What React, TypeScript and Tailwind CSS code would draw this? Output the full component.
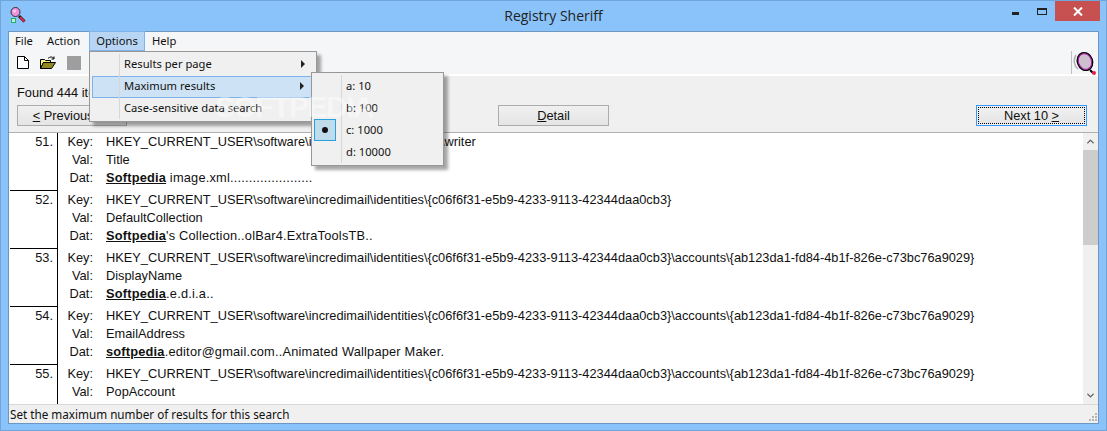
import { ChevronDown, ChevronUp } from "lucide-react";

const KEY_ROOT = "HKEY_CURRENT_USER\\software\\incredimail\\identities\\";
const KEY_BASE = KEY_ROOT + "{c06f6f31-e5b9-4233-9113-42344daa0cb3}";
const ACCOUNT = KEY_BASE + "\\accounts\\{ab123da1-fd84-4b1f-826e-c73bc76a9029}";

const results = [
  { n: 51, key: KEY_ROOT + "im\\writer", val: "Title", hit: "Softpedia", dat: " image.xml......................" },
  { n: 52, key: KEY_BASE, val: "DefaultCollection", hit: "Softpedia", dat: "'s Collection..olBar4.ExtraToolsTB.." },
  { n: 53, key: ACCOUNT, val: "DisplayName", hit: "Softpedia", dat: ".e.d.i.a.." },
  { n: 54, key: ACCOUNT, val: "EmailAddress", hit: "softpedia", dat: ".editor@gmail.com..Animated Wallpaper Maker." },
  { n: 55, key: ACCOUNT, val: "PopAccount", hit: "", dat: "" },
];

function AppIcon() {
  return (
    <svg width="16" height="16" viewBox="0 0 16 16">
      <rect x="1.500" y="11.500" width="4" height="4" fill="#c8f0d0" stroke="#22b070" />
      <path d="M9 9l5.500 5.500" stroke="#111" strokeWidth="3" />
      <path d="M10 10l4.500 4.500" stroke="#e02850" strokeWidth="2" />
      <circle cx="5.500" cy="5" r="4.500" fill="#f090e0" stroke="#333" />
      <circle cx="4.500" cy="4" r="1.500" fill="#f8d0f0" />
    </svg>
  );
}

function Magnifier() {
  return (
    <svg width="24" height="24" viewBox="0 0 24 24">
      <path d="M3 4c-3 5-2 11 2 14" fill="none" stroke="#b0b0b0" strokeWidth="1.500" />
      <ellipse cx="12" cy="10.500" rx="7.500" ry="9" transform="rotate(-20 12 10.500)" fill="#cdbfcd" stroke="#000" strokeWidth="1.500" />
      <ellipse cx="12" cy="10.500" rx="6.500" ry="8" transform="rotate(-20 12 10.500)" fill="none" stroke="#a818a8" />
      <path d="M17 19l3 3" stroke="#000" strokeWidth="2" />
      <circle cx="21" cy="22" r="2" fill="#e82050" />
    </svg>
  );
}

function FileIcon() {
  return (
    <svg width="12" height="13" viewBox="0 0 12 13">
      <path d="M.5.500h7l4 4v8h-11z" fill="#fff" stroke="#000" />
      <path d="M7.500.500v4h4" fill="none" stroke="#000" />
    </svg>
  );
}

function FolderIcon() {
  return (
    <svg width="16" height="13" viewBox="0 0 16 13">
      <path d="M.5 3.500h4l1 1h5v2h-7l-3 6z" fill="#f8f080" stroke="#000" />
      <path d="M.5 12.500l3-6h12l-4 6z" fill="#8f8a20" stroke="#000" />
      <path d="M8 2.500c2-2 4-2 6 0M14 .5v2.500h-2.500" fill="none" stroke="#000" />
    </svg>
  );
}

function Arrow() {
  return <span className="w-0 h-0 border-y-[4px] border-y-transparent border-l-[4px] border-l-[#222]" />;
}

function Button({ children, className }: { children: React.ReactNode; className: string }) {
  return (
    <div className={`h-[21px] flex items-center justify-center bg-gradient-to-b from-[#f0f0f0] to-[#e5e5e5] border border-[#acacac] text-[#111] ${className}`}>
      {children}
    </div>
  );
}

function ResultRow({ r, last }: { r: (typeof results)[number]; last: boolean }) {
  return (
    <div className={`flex ${last ? "h-[39px]" : "h-[58px]"}`}>
      <div className="w-px shrink-0" />
      <div className="flex flex-col w-[48px] shrink-0">
        <div className="flex-1 border-r border-black pr-[4px] text-right leading-[18px]">{r.n}.</div>
        {!last && <div className="h-px bg-black" />}
      </div>
      <div className="w-[36px] shrink-0 text-right leading-[18px]">
        <div className="pr-px">Key:</div>
        <div className="pr-px">Val:</div>
        {!last && <div className="pr-px">Dat:</div>}
      </div>
      <div className="pl-[12px] leading-[18px] whitespace-pre">
        <div>{r.key}</div>
        <div>{r.val}</div>
        {!last && (
          <div className="tracking-[0.2px]">
            <span className="font-bold underline">{r.hit}</span>
            {r.dat}
          </div>
        )}
      </div>
    </div>
  );
}

export default function App() {
  return (
    <div className="relative w-[1107px] h-[431px] overflow-hidden flex flex-col bg-[#8ac3f9] border border-[#6fa5d8] font-['Noto_Sans',sans-serif] text-[11.2px] text-[#111]">
      {/* title bar */}
      <div className="h-[30px] shrink-0 flex items-start relative">
        <div className="pl-[9px] mt-[6px]"><AppIcon /></div>
        <div className="absolute inset-x-0 top-[5px] text-center text-[14px] leading-[20px] text-[#222] font-['Open_Sans',sans-serif]">Registry Sheriff</div>
        <div className="ml-auto flex items-start">
          <div className="w-[28px] h-[20px] flex justify-center pt-[11px]"><div className="w-[7px] h-[3px] bg-[#222]" /></div>
          <div className="w-[26px] h-[20px] flex justify-center pt-[7px]"><div className="w-[8px] h-[4px] border border-t-[2px] border-[#222] box-content" /></div>
          <div className="w-[45px] h-[20px] mr-[6px] bg-[#c75050] flex items-center justify-center">
            <svg width="10" height="9" viewBox="0 0 10 9"><path d="M1 .5l8 8M9 .5l-8 8" stroke="#fff" strokeWidth="2" /></svg>
          </div>
        </div>
      </div>

      <div className="flex-1 min-h-0 mx-[7px] mb-[6px] flex flex-col border border-[#6d97c0] bg-[#f0f0f0]">
        {/* menu bar */}
        <div className="h-[19px] shrink-0 flex bg-[#f5f6f7] leading-[17px]">
          <span className="w-[32px] pl-[6px]">File</span>
          <span className="w-[48px] pl-[6px]">Action</span>
          <span className="w-[56px] h-[20px] -mt-px text-center bg-[#b8d6f4] border border-[#7fb4e8] leading-[17px]">Options</span>
          <span className="pl-[7px]">Help</span>
        </div>
        {/* toolbar */}
        <div className="h-[25px] shrink-0 flex items-center bg-[#f5f6f7] border-b-2 border-b-white pl-[8px]">
          <FileIcon />
          <div className="ml-[11px]"><FolderIcon /></div>
          <div className="w-[14px] h-[14px] bg-[#9e9e9e] ml-[11px]" />
          <div className="ml-[8px] w-[2px] h-[15px] bg-[#a8a8a8]" />
          <div className="ml-auto w-[27px] h-full border-l border-[#c0c0c0] flex items-center justify-center">
            <Magnifier />
          </div>
        </div>
        {/* search summary and paging */}
        <div className="h-[56px] shrink-0 flex flex-col pl-[8px] pr-[11px] bg-[#f0f0f0] font-['Liberation_Sans',sans-serif] text-[12.8px]">
          <div className="h-[29px] pt-[9px] leading-[16px]">Found 444 items</div>
          <div className="flex items-start">
            <Button className="w-[110px]"><span><u>&lt;</u> Previous 10</span></Button>
            <Button className="w-[111px] ml-[371px]"><span><u>D</u>etail</span></Button>
            <div className="ml-auto h-[21px] w-[111px] border border-[#3399ff] p-px">
              <div className="h-full flex items-center justify-center border border-dotted border-black bg-gradient-to-b from-[#f0f0f0] to-[#e5e5e5]">
                <span>Next 10 <u>&gt;</u></span>
              </div>
            </div>
          </div>
        </div>
        {/* results */}
        <div className="flex-1 min-h-0 flex bg-white border-t border-[#b0b0b0] font-['Liberation_Sans',sans-serif] text-[12.8px] text-[#111]">
          <div className="flex-1 min-w-0 overflow-hidden">
            {results.map((r, i) => (
              <ResultRow key={r.n} r={r} last={i === results.length - 1} />
            ))}
          </div>
          <div className="w-[15px] shrink-0 flex flex-col items-center bg-[#f0f0f0]">
            <ChevronUp size={11} strokeWidth={3} className="mt-[3px] text-[#606060]" />
            <div className="mt-[3px] w-full h-[95px] bg-[#cdcdcd]" />
            <ChevronDown size={11} strokeWidth={3} className="mt-auto mb-[3px] text-[#606060]" />
          </div>
        </div>
        {/* status bar */}
        <div className="h-[19px] shrink-0 border-t border-[#d7d7d7] bg-[#f0f0f0] pl-[1px] text-[11.7px] leading-[19px] relative">
          Set the maximum number of results for this search
          <div className="absolute right-[1px] bottom-[2px] grid grid-cols-3 gap-[1px] w-[8px]">
            {[0, 0, 1, 0, 1, 1, 1, 1, 1].map((on, i) => (
              <div key={i} className={`w-[2px] h-[2px] ${on ? "bg-[#b5b5b5]" : ""}`} />
            ))}
          </div>
        </div>
      </div>

      {/* Options menu */}
      <div className="absolute left-[88px] top-[50px] w-[228px] h-[71px] bg-[#f0f0f0] border border-[#979797] shadow-[4px_4px_3px_rgba(0,0,0,0.35)] py-[2px] px-[2px]">
        <div className="absolute left-[29px] top-[2px] bottom-[2px] w-px bg-[#d7d7d7]" />
        {[
          { t: "Results per page", arrow: true },
          { t: "Maximum results", arrow: true, active: true },
          { t: "Case-sensitive data search", arrow: false },
        ].map((m) => (
          <div key={m.t} className={`h-[22px] flex items-center pr-[9px] pb-[2px] justify-between ${m.active ? "bg-[#cde2f4] border border-[#7db4ea] pl-[31px]" : "pl-[32px]"}`}>
            <span>{m.t}</span>
            {m.arrow && <Arrow />}
          </div>
        ))}
      </div>

      {/* Maximum results submenu */}
      <div className="absolute left-[310px] top-[71px] w-[133px] h-[94px] bg-[#f0f0f0] border border-[#979797] shadow-[4px_4px_3px_rgba(0,0,0,0.35)] py-[2px]">
        <div className="absolute left-[29px] top-[2px] bottom-[2px] w-px bg-[#d7d7d7]" />
        {["a: 10", "b: 100", "c: 1000", "d: 10000"].map((t) => (
          <div key={t} className="h-[22px] flex items-center pl-[34px]">
            <span>{t}</span>
          </div>
        ))}
        <div className="absolute left-[2px] top-[46px] w-[22px] h-[22px] bg-[#c0dcec] border border-[#29a0e0] flex items-center justify-center">
          <div className="w-[6px] h-[6px] rounded-full bg-[#111]" />
        </div>
      </div>

      {/* watermark */}
      <div className="absolute left-[214px] top-[91px] text-[30px] leading-[30px] font-bold tracking-[-1.5px] font-['Liberation_Sans',sans-serif] text-white/45 select-none pointer-events-none">
        SOFTPEDIA<sup className="text-[9px] font-normal tracking-normal">®</sup>
      </div>
    </div>
  );
}
